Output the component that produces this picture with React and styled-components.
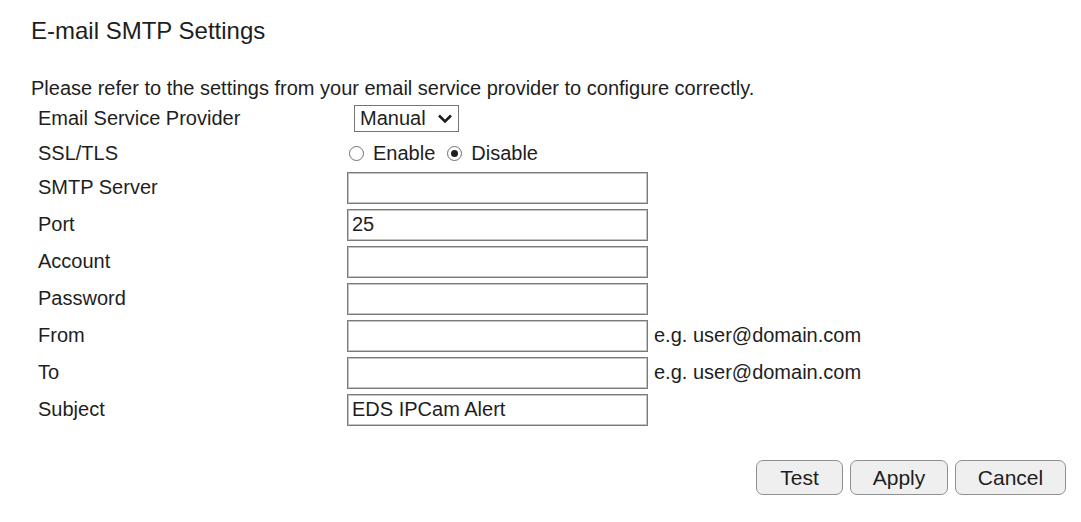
import React from "react"
import styled, { createGlobalStyle } from "styled-components"

const GlobalStyle = createGlobalStyle`
  body {
    margin: 0;
    background: #fff;
    font-family: "Liberation Sans", Arial, sans-serif;
    color: #1e1e1e;
  }
`

const Page = styled.div`
  width: 1081px;
  height: 522px;
  padding: 17px 15px 0 31px;
  box-sizing: border-box;
`

const Title = styled.h1`
  margin: 0;
  font-size: 24px;
  line-height: 28px;
  font-weight: normal;
`

const Intro = styled.p`
  margin: 33px 0 0;
  font-size: 20px;
  line-height: 20px;
`

const Form = styled.div`
  display: grid;
  grid-template-columns: 309px auto;
  grid-template-rows: 40px 31px;
  grid-auto-rows: 37px;
  padding-left: 7px;
`

const Label = styled.div`
  display: flex;
  align-items: center;
  font-size: 20px;
`

const Field = styled.div`
  display: flex;
  align-items: center;
  gap: 6px;
  padding-left: ${({ $indent }) => $indent || 0}px;
  font-size: 20px;
`

const TextInput = styled.input`
  width: 301px;
  height: 32px;
  box-sizing: border-box;
  border: 1px solid #7a7a7a;
  box-shadow: inset 1px 1px 0 #c4c4c4, inset -1px -1px 0 #c4c4c4;
  padding: 0 4px;
  font-family: inherit;
  font-size: 20px;
  color: #1e1e1e;
  outline: none;
`

const Hint = styled.span`
  font-size: 20px;
`

const SelectBox = styled.div`
  width: 105px;
  height: 27px;
  box-sizing: border-box;
  border: 1px solid #767676;
  display: flex;
  align-items: center;
  justify-content: space-between;
  padding: 0 5px 0 5px;
  font-size: 20px;
`

const RadioLabel = styled.label`
  display: inline-flex;
  align-items: center;
  gap: 9px;
  font-size: 20px;
  & + & {
    margin-left: 6px;
  }
`

const RadioDot = styled.span`
  flex: 0 0 auto;
  width: 15px;
  height: 15px;
  box-sizing: border-box;
  border-radius: 50%;
  border: 1px solid #6f6f6f;
  display: inline-flex;
  align-items: center;
  justify-content: center;
  &::after {
    content: "";
    width: 7px;
    height: 7px;
    border-radius: 50%;
    background: ${({ $on }) => ($on ? "#1e1e1e" : "transparent")};
  }
`

const Actions = styled.div`
  display: flex;
  justify-content: flex-end;
  gap: 7px;
  margin-top: 32px;
`

const Button = styled.button`
  width: ${({ $w }) => $w}px;
  height: 35px;
  border: 1px solid #8f8f8f;
  border-radius: 7px;
  background: #efefef;
  font-family: inherit;
  font-size: 21px;
  color: #1e1e1e;
  padding: 0;
`

const Chevron = () => (
  <svg width="16" height="11" viewBox="0 0 16 11">
    <path d="M2 2.5 L8 8.5 L14 2.5" fill="none" stroke="#1e1e1e" strokeWidth="2.6" />
  </svg>
)

const rows = [
  { label: "SMTP Server", value: "" },
  { label: "Port", value: "25" },
  { label: "Account", value: "" },
  { label: "Password", value: "", type: "password" },
  { label: "From", value: "", hint: "e.g. user@domain.com" },
  { label: "To", value: "", hint: "e.g. user@domain.com" },
  { label: "Subject", value: "EDS IPCam Alert" },
]

export default function App() {
  return (
    <>
      <GlobalStyle />
      <Page>
        <Title>E-mail SMTP Settings</Title>
        <Intro>Please refer to the settings from your email service provider to configure correctly.</Intro>
        <Form>
          <Label>Email Service Provider</Label>
          <Field $indent={7}>
            <SelectBox>
              <span>Manual</span>
              <Chevron />
            </SelectBox>
          </Field>
          <Label>SSL/TLS</Label>
          <Field $indent={2}>
            <RadioLabel>
              <RadioDot />
              Enable
            </RadioLabel>
            <RadioLabel>
              <RadioDot $on />
              Disable
            </RadioLabel>
          </Field>
          {rows.map((r) => (
            <React.Fragment key={r.label}>
              <Label>{r.label}</Label>
              <Field>
                <TextInput type={r.type || "text"} defaultValue={r.value} />
                {r.hint && <Hint>{r.hint}</Hint>}
              </Field>
            </React.Fragment>
          ))}
        </Form>
        <Actions>
          <Button $w={87}>Test</Button>
          <Button $w={98}>Apply</Button>
          <Button $w={111}>Cancel</Button>
        </Actions>
      </Page>
    </>
  )
}
